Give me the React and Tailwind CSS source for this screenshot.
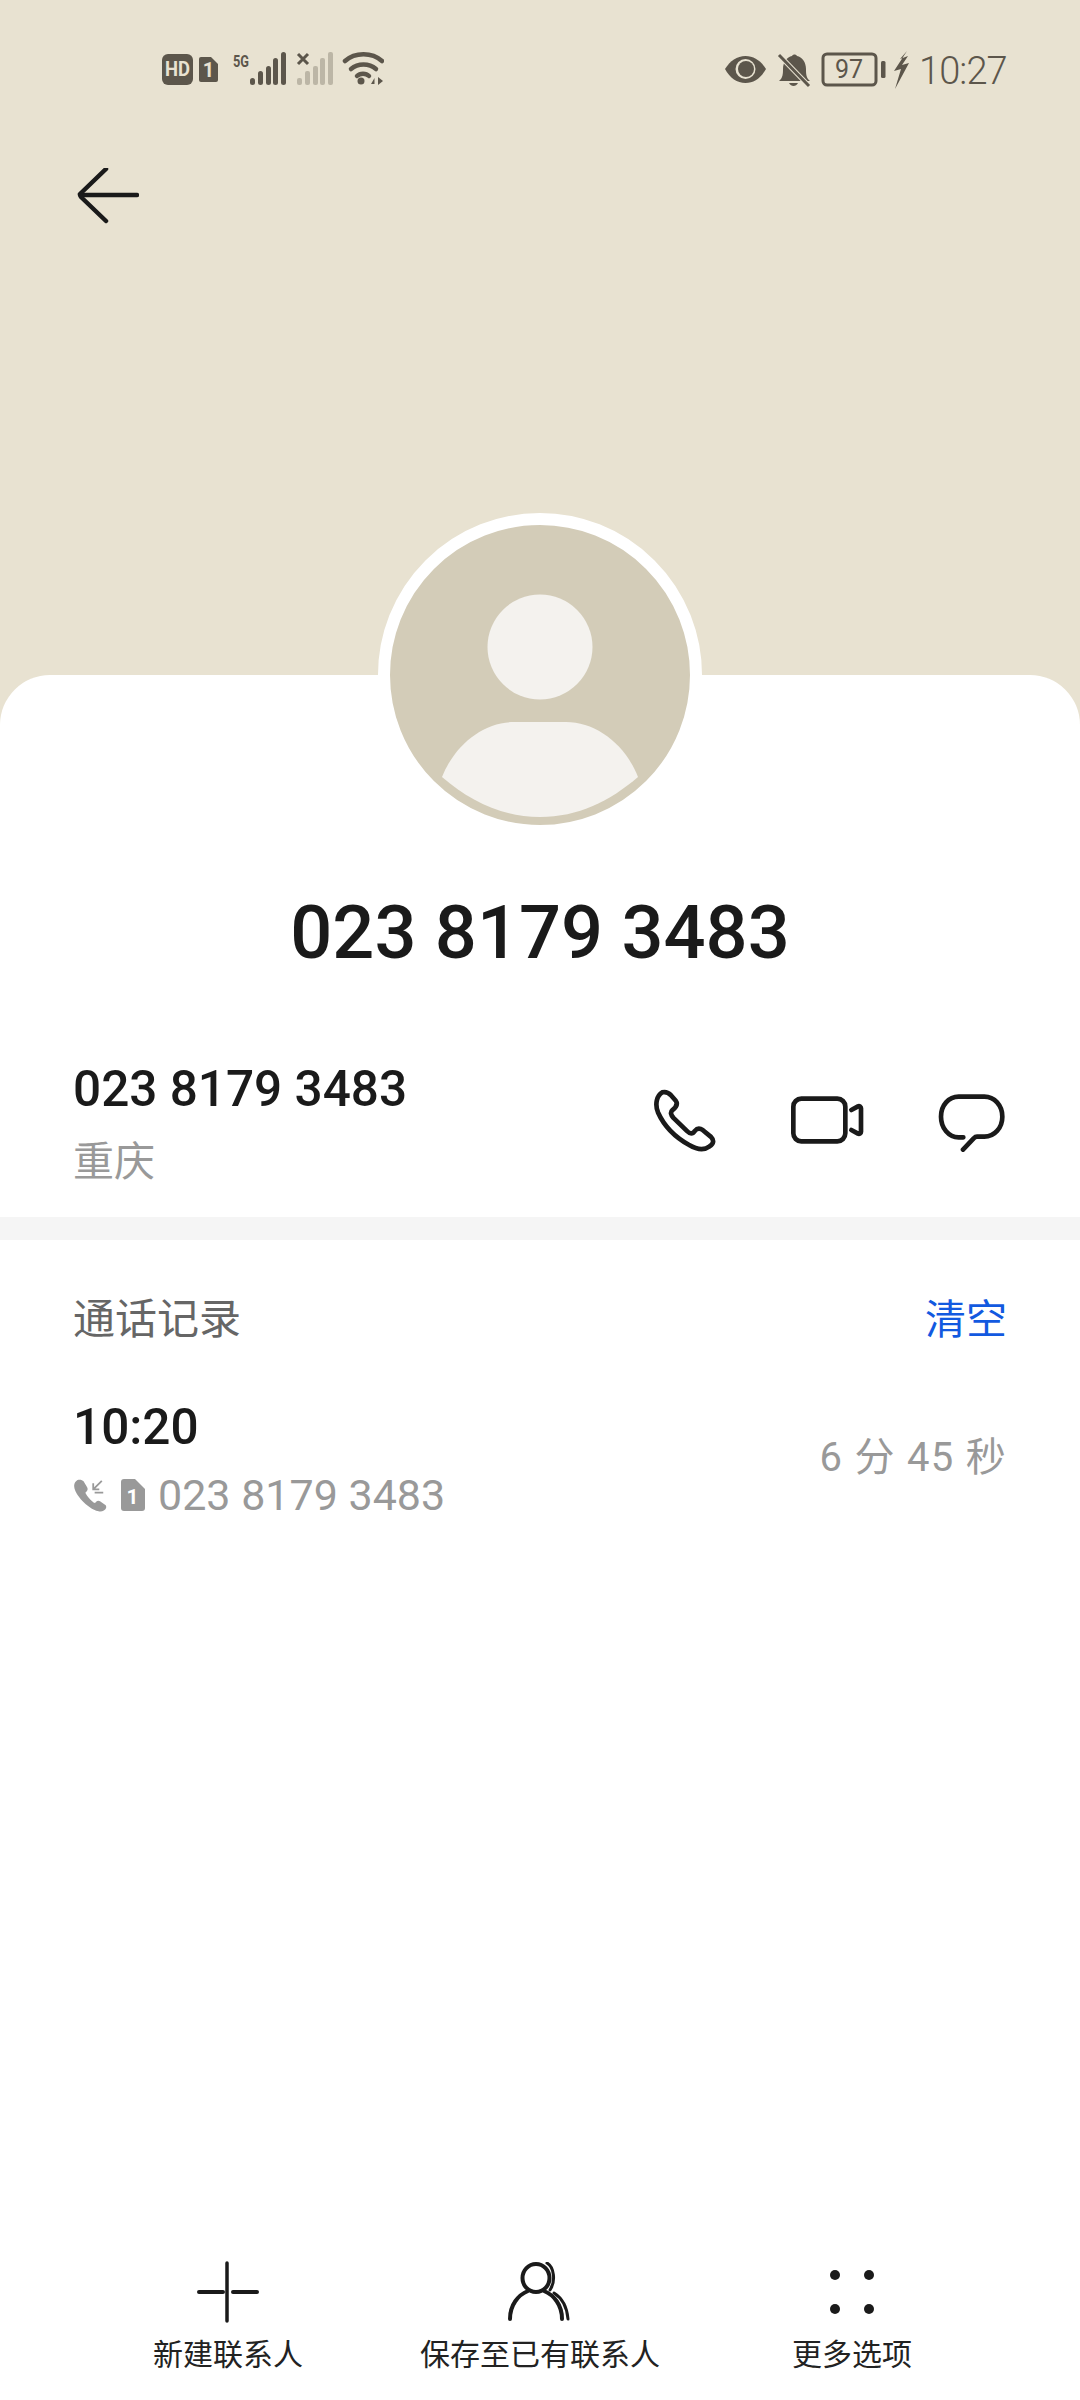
const InkStatus = '#5c564b'

const StatusLeft = () => (
    <svg width="222" height="40" viewBox="162 48 222 40" fill={InkStatus}>
        <rect x="162" y="53" width="31" height="31" rx="6" />
        <text x="177.5" y="75" textAnchor="middle" fontSize="20" fontWeight="700" fontFamily="Roboto, sans-serif" fill="#e8e2d1" textLength="25" lengthAdjust="spacingAndGlyphs">HD</text>
        <path d="M201 56h10l7 7v16a2 2 0 0 1-2 2h-15a2 2 0 0 1-2-2V58a2 2 0 0 1 2-2z" />
        <text x="208.5" y="76" textAnchor="middle" fontSize="20" fontWeight="700" fontFamily="Roboto, sans-serif" fill="#e8e2d1">1</text>
        <text x="233" y="66" fontSize="17" fontWeight="700" fontFamily="Roboto, sans-serif" textLength="16" lengthAdjust="spacingAndGlyphs">5G</text>
        <rect x="250" y="77" width="5" height="7" rx="2.5" />
        <rect x="258" y="70" width="5" height="14" rx="2.5" />
        <rect x="266" y="65" width="5" height="19" rx="2.5" />
        <rect x="273" y="57" width="5" height="27" rx="2.5" />
        <rect x="281" y="51" width="5" height="33" rx="2.5" />
        <path d="M298 53l10 10M308 53l-10 10" stroke={InkStatus} strokeWidth="3" fill="none" />
        <g fill="#bcb6a6">
            <rect x="297" y="77" width="5" height="7" rx="2" />
            <rect x="305" y="70" width="5" height="14" rx="2" />
            <rect x="313" y="65" width="5" height="19" rx="2" />
            <rect x="320" y="57" width="5" height="27" rx="2" />
            <rect x="328" y="51" width="5" height="33" rx="2" />
        </g>
        <g fill="none" stroke={InkStatus} strokeWidth="4.5" strokeLinecap="round">
            <path d="M345 60c10-9 27-9 37 0" />
            <path d="M351 68c7-6 18-6 25 0" />
            <path d="M357 75c3-3 9-3 12 0" />
        </g>
        <circle cx="361" cy="80" r="3.5" />
        <path d="M371 83l3.500-6v6zM378 76l5 4-5 4z" />
    </svg>
)

const StatusRight = () => (
    <div className="flex items-center">
        <svg width="186" height="40" viewBox="722 49 186 40" fill={InkStatus}>
            <path d="M724 68c5-8 12-13 20.500-13s15.500 5 20.500 13c-5 9-12 14-20.500 14s-15.500-5-20.500-14z" />
            <circle cx="744.500" cy="68" r="10" fill="#e8e2d1" />
            <circle cx="745" cy="68" r="8" />
            <path d="M778 80c4-3 4-8 4-12 0-7 4-12 9-13 1-2 4-2 5 0 5 1 9 6 9 13 0 4 0 9 4 12z" />
            <path d="M788 82c2 4 7 4 9 0z" />
            <path d="M779 55l28 29" stroke="#e8e2d1" strokeWidth="5" />
            <path d="M778 54l30 31" stroke={InkStatus} strokeWidth="3" />
            <rect x="822" y="53" width="53" height="31" rx="4" fill="none" stroke={InkStatus} strokeWidth="3" />
            <text x="848" y="77" textAnchor="middle" fontSize="25" fontFamily="Roboto, sans-serif" fontWeight="400">97</text>
            <rect x="880" y="60" width="4.500" height="17" rx="1.500" />
            <path d="M906 50l-13 20 7-2-6 20 14-26-7 2 6-9-8 3z" />
        </svg>
        <span className="ml-[10px] w-[86px] mt-[2px] text-[38px] leading-[40px] font-light tracking-[-0.9px] text-[#5c564b]">10:27</span>
    </div>
)

const PhoneIcon = () => (
    <svg width="62" height="63" viewBox="100 115 185 188" fill="none" stroke="#1a1a1a" strokeWidth="14" strokeLinejoin="round">
        <path d="M125 125c10-3 17 0 25 8l15 17c7 10 0 20-10 28-7 6-5 14 3 23l40 39c10 10 17 10 24 0 8-10 16-8 24-2l24 20c10 10 8 20-4 28-16 12-34 12-61-4-40-22-75-57-93-97-10-25-4-50 13-60z" />
    </svg>
)

const VideoIcon = () => (
    <svg width="73" height="48" viewBox="515 138 219 144" fill="none" stroke="#1a1a1a" strokeWidth="14" strokeLinecap="round" strokeLinejoin="round">
        <rect x="522" y="146" width="156" height="128" rx="24" />
        <path d="M696 180l20-11c4-2 9 1 9 6v70c0 5-5 8-9 6l-20-11" />
    </svg>
)

const ChatIcon = () => (
    <svg width="67" height="58" viewBox="955 126 201 174" fill="none" stroke="#1a1a1a" strokeWidth="14" strokeLinecap="round" strokeLinejoin="round">
        <path d="M1031 256h-14c-30 0-53-28-53-62s23-60 53-60h77c30 0 54 26 54 60s-24 60-54 60h-22c-4 0-7 2-10 5l-32 34" />
    </svg>
)

const NavItem = ({ icon, label }) => (
    <div className="flex flex-col items-center w-[312px]">
        <div className="h-[62px] flex items-center justify-center">{icon}</div>
        <span className="mt-[12px] text-[30px] leading-[40px] text-[#222222]">{label}</span>
    </div>
)

const App = () => {
    return (
        <div className="w-[1080px] h-[2400px] flex flex-col bg-[#e8e2d1] overflow-hidden font-['Roboto','Noto_Sans_CJK_SC',sans-serif]">
            {/* header */}
            <div className="h-[675px] shrink-0">
                <div className="pt-[49px] pl-[162px] pr-[75px] h-[90px] flex justify-between items-start">
                    <StatusLeft />
                    <StatusRight />
                </div>
                <div className="pl-[77px] pt-[78px]">
                    <svg width="62" height="56" viewBox="0 0 62 56" fill="none" stroke="#1a1a1a" strokeWidth="4.500" strokeLinecap="round" strokeLinejoin="round">
                        <path d="M3 27h57" />
                        <path d="M3 26l26-25M4 29l25 24" />
                    </svg>
                </div>
            </div>

            {/* card */}
            <div className="flex-1 bg-white rounded-t-[50px] flex flex-col">
                <div className="-mt-[162px] self-center w-[324px] h-[324px] rounded-full border-[12px] border-white bg-[#d3ccb8] shrink-0">
                    <svg width="300" height="300" viewBox="0 0 300 300">
                        <circle cx="150" cy="122" r="52.500" fill="#f4f2ee" />
                        <path d="M52 252c13-33 42-55 72-55h52c30 0 59 22 72 55-28 24-60 40-98 40s-70-16-98-40z" fill="#f4f2ee" />
                    </svg>
                </div>

                <h1 className="mt-[51px] text-center text-[74px] leading-[90px] font-medium text-[#1a1a1a]">023 8179 3483</h1>

                <div className="mt-[76px] pl-[73px] pr-[75px] flex justify-between items-center">
                    <div>
                        <div className="text-[49.500px] leading-[70px] font-medium text-[#1a1a1a]">023 8179 3483</div>
                        <div className="mt-[8px] text-[41px] leading-[60px] text-[#999999]">重庆</div>
                    </div>
                    <div className="flex items-center -mt-[6px]">
                        <PhoneIcon />
                        <div className="ml-[75px]"><VideoIcon /></div>
                        <div className="ml-[74px] mt-[6px]"><ChatIcon /></div>
                    </div>
                </div>

                <div className="mt-[25px] h-[23px] bg-[#f5f5f5]" />

                <div className="mt-[51px] pl-[73px] pr-[73px] flex justify-between items-center">
                    <span className="text-[42px] leading-[58px] text-[#666666]">通话记录</span>
                    <span className="text-[41px] leading-[58px] text-[#1259e0]">清空</span>
                </div>

                <div className="mt-[47px] pl-[73px] pr-[73px] flex justify-between items-center">
                    <div>
                        <div className="text-[49.500px] leading-[62px] font-medium text-[#1a1a1a]">10:20</div>
                        <div className="mt-[12px] flex items-center">
                            <svg width="34" height="34" viewBox="74 285 92 95" fill="#999999">
                                <path d="M88 290c-8 2-13 10-12 20 2 20 35 60 68 68 9 2 18-2 21-9 1-4 0-7-3-9l-14-10c-4-2-7-2-10 1l-4 4c-10-4-23-20-27-29l4-4c3-3 3-7 1-11l-10-17c-3-3-8-5-14-4z" />
                                <path d="M153 293l-24 24M129 300v17h17M133 326h24" stroke="#999999" strokeWidth="5" fill="none" />
                            </svg>
                            <svg className="ml-[14px]" width="24" height="32" viewBox="0 0 24 32" fill="#999999">
                                <path d="M3 0h11l10 10v19a3 3 0 0 1-3 3H3a3 3 0 0 1-3-3V3a3 3 0 0 1 3-3z" />
                                <text x="11.500" y="25" textAnchor="middle" fontSize="21" fontWeight="700" fontFamily="Roboto, sans-serif" fill="#ffffff">1</text>
                            </svg>
                            <span className="ml-[13px] text-[43px] leading-[50px] text-[#999999]">023 8179 3483</span>
                        </div>
                    </div>
                    <span className="text-[40px] leading-[50px] tracking-[1.300px] text-[#999999]">6 分 45 秒</span>
                </div>

                <div className="flex-1" />

                {/* bottom actions */}
                <div className="flex justify-center pb-[25px]">
                    <NavItem
                        label="新建联系人"
                        icon={
                            <svg width="62" height="62" viewBox="0 0 62 62" fill="none" stroke="#1a1a1a" strokeLinecap="round">
                                <path d="M30 2v58" strokeWidth="3.500" />
                                <path d="M2 31h24M36 31h24" strokeWidth="4" />
                            </svg>
                        }
                    />
                    <NavItem
                        label="保存至已有联系人"
                        icon={
                            <svg width="64" height="60" viewBox="0 0 64 60" fill="none" stroke="#1a1a1a" strokeLinecap="round">
                                <ellipse cx="28" cy="16" rx="13.500" ry="14" strokeWidth="4" />
                                <path d="M2 57c0-14 8-24 18-28M54 57c0-14-8-24-18-28" strokeWidth="4" />
                                <path d="M39 1c7 4 9 18 3 27" strokeWidth="3" />
                                <path d="M46 31c8 5 13 14 14 26" strokeWidth="3" />
                            </svg>
                        }
                    />
                    <NavItem
                        label="更多选项"
                        icon={
                            <svg width="46" height="46" viewBox="0 0 46 46" fill="#1a1a1a">
                                <circle cx="6" cy="6" r="5" />
                                <circle cx="40" cy="6" r="5" />
                                <circle cx="6" cy="40" r="5" />
                                <circle cx="40" cy="40" r="5" />
                            </svg>
                        }
                    />
                </div>
            </div>
        </div>
    )
}

export default App
